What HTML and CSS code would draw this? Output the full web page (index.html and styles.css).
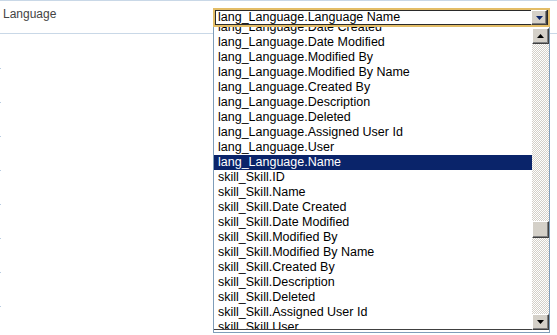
FILE: index.html
```html
<!DOCTYPE html>
<html lang="en">
<head>
    <meta charset="UTF-8">
    <meta name="viewport" content="width=device-width, initial-scale=1.0">
    <title>Field Mapping</title>
    <link rel="stylesheet" href="styles.css">
</head>
<body>
    <div class="form">
        <div class="form-row">
            <div class="label">Language</div>
            <div class="field">
                <div class="select">
                    <div class="select-inner">
                        <span class="select-value">lang_Language.Language Name</span>
                        <span class="btn3d select-btn">
                            <svg width="7" height="4" viewBox="0 0 7 4"><polygon points="0,0 7,0 3.5,4" fill="#0a246a"/></svg>
                        </span>
                    </div>
                </div>
                <div class="dropdown">
                    <div class="options-view">
                        <ul class="options">
                            <li>lang_Language.Date Created</li>
                            <li>lang_Language.Date Modified</li>
                            <li>lang_Language.Modified By</li>
                            <li>lang_Language.Modified By Name</li>
                            <li>lang_Language.Created By</li>
                            <li>lang_Language.Description</li>
                            <li>lang_Language.Deleted</li>
                            <li>lang_Language.Assigned User Id</li>
                            <li>lang_Language.User</li>
                            <li class="selected">lang_Language.Name</li>
                            <li>skill_Skill.ID</li>
                            <li>skill_Skill.Name</li>
                            <li>skill_Skill.Date Created</li>
                            <li>skill_Skill.Date Modified</li>
                            <li>skill_Skill.Modified By</li>
                            <li>skill_Skill.Modified By Name</li>
                            <li>skill_Skill.Created By</li>
                            <li>skill_Skill.Description</li>
                            <li>skill_Skill.Deleted</li>
                            <li>skill_Skill.Assigned User Id</li>
                            <li>skill_Skill.User</li>
                        </ul>
                    </div>
                    <div class="scrollbar">
                        <div class="btn3d sb-btn">
                            <svg width="7" height="4" viewBox="0 0 7 4"><polygon points="0,4 7,4 3.5,0" fill="#000"/></svg>
                        </div>
                        <div class="sb-track">
                            <div class="btn3d sb-thumb"></div>
                        </div>
                        <div class="btn3d sb-btn">
                            <svg width="7" height="4" viewBox="0 0 7 4"><polygon points="0,0 7,0 3.5,4" fill="#000"/></svg>
                        </div>
                    </div>
                </div>
            </div>
        </div>
        <div class="rows">
            <div class="sep"></div>
            <div class="sep"></div>
            <div class="sep"></div>
            <div class="sep"></div>
            <div class="sep"></div>
            <div class="sep"></div>
            <div class="sep"></div>
            <div class="sep"></div>
            <div class="sep"></div>
        </div>
    </div>
</body>
</html>
```

FILE: styles.css
```css
body {
    margin: 0;
    background: #fff;
    font-family: "Liberation Sans", Arial, sans-serif;
}

.form {
    height: 335px;
    overflow: hidden;
}

.form-row {
    position: relative;
    display: flex;
    align-items: flex-start;
    height: 32px;
    border-top: 1px solid #c9d8e7;
    border-bottom: 1px solid #c9d8e7;
}

.label {
    width: 213px;
    box-sizing: border-box;
    padding: 6px 0 0 3px;
    font-size: 12px;
    line-height: 15px;
    color: #444;
}

.field {
    position: relative;
    z-index: 2;
    width: 337px;
    padding-top: 7px;
}

.select {
    border: 2px solid #e3bd67;
}

.select-inner {
    display: flex;
    align-items: center;
    height: 13px;
    border: 1px solid #2a2a2a;
    font-size: 12.5px;
    line-height: 13px;
    color: #000;
}

.select-value {
    flex: 1;
    padding-left: 2px;
    white-space: nowrap;
}

.btn3d {
    box-sizing: border-box;
    background: #d4d0c8;
    border: 1px solid;
    border-color: #fff #404040 #404040 #fff;
    box-shadow: inset -1px -1px 0 #808080;
    display: flex;
    align-items: center;
    justify-content: center;
}

.select-btn {
    width: 16px;
    height: 15px;
    margin: -1px 0;
}

.dropdown {
    position: absolute;
    top: 100%;
    left: 0;
    width: 337px;
    height: 306px;
    box-sizing: border-box;
    display: flex;
    background: #fff;
    border: 1px solid #7f9db9;
    border-top: none;
}

.options-view {
    flex: 1;
    overflow: hidden;
    margin-bottom: 2px;
    border-bottom: 1px solid #404040;
}

.options {
    list-style: none;
    margin: -7px 0 0;
    padding: 0;
    font-size: 12.5px;
}

.options li {
    height: 15px;
    line-height: 15px;
    padding-left: 4px;
    white-space: nowrap;
    color: #000;
}

.options li.selected {
    background: #0a246a;
    color: #fff;
}

.scrollbar {
    width: 17px;
    display: flex;
    flex-direction: column;
    padding: 1px 0 2px;
}

.sb-btn {
    width: 17px;
    height: 16px;
    flex: none;
}

.sb-track {
    flex: 1;
    background: repeating-conic-gradient(#d4d0c8 0 25%, #fff 0 50%) 0 0 / 2px 2px;
}

.sb-thumb {
    width: 17px;
    height: 17px;
    margin-top: 177px;
}

.rows {
    padding-top: 1px;
}

.sep {
    width: 1px;
    height: 33px;
    border-bottom: 1px solid #b9cde2;
}
```
